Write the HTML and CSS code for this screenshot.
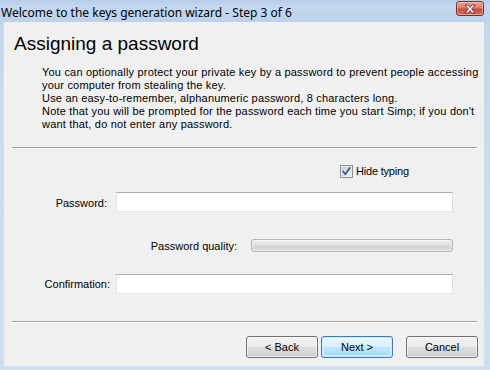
FILE: index.html
```html
<!DOCTYPE html>
<html>
<head>
<meta charset="utf-8">
<link rel="stylesheet" href="styles.css">
</head>
<body>
<div class="window">
  <div class="titlebar">
    <span class="title">Welcome to the keys generation wizard - Step 3 of 6</span>
    <button class="close" aria-label="Close">
      <svg width="14" height="10" viewBox="0 0 14 10">
        <path d="M2 1 L5 1 L7 3.5 L9 1 L12 1 L8.6 5 L12 9 L9 9 L7 6.5 L5 9 L2 9 L5.4 5 Z" fill="#fff" stroke="#5a1e18" stroke-width="0.8" stroke-linejoin="round"/>
      </svg>
    </button>
  </div>
  <div class="client">
    <h1 class="heading">Assigning a password</h1>
    <p class="intro">You can optionally protect your private key by a password to prevent people accessing<br>your computer from stealing the key.<br>Use an easy-to-remember, alphanumeric password, 8 characters long.<br>Note that you will be prompted for the password each time you start Simp; if you don't<br>want that, do not enter any password.</p>
    <div class="sep"></div>
    <div class="check-row">
      <span class="checkbox">
        <svg width="13" height="13" viewBox="0 0 13 13">
          <defs>
            <linearGradient id="cb" x1="0" y1="0" x2="1" y2="1">
              <stop offset="0" stop-color="#cbcfd5"/>
              <stop offset="1" stop-color="#f6f6f6"/>
            </linearGradient>
          </defs>
          <rect x="0.5" y="0.5" width="12" height="12" fill="#fff" stroke="#8e8f8f"/>
          <rect x="2" y="2" width="9" height="9" fill="url(#cb)" stroke="#b9bec4" stroke-width="0.6"/>
          <path d="M3.2 6.4 L5.3 9.2 L9.8 2.8" fill="none" stroke="#34508a" stroke-width="1.6" stroke-linecap="round" stroke-linejoin="round"/>
        </svg>
      </span>
      <span class="check-label">Hide typing</span>
    </div>
    <div class="field-row pw-row">
      <label class="field-label">Password:</label>
      <div class="input"></div>
    </div>
    <div class="field-row quality-row">
      <span class="field-label">Password quality:</span>
      <div class="progress"></div>
    </div>
    <div class="field-row confirm-row">
      <label class="field-label">Confirmation:</label>
      <div class="input"></div>
    </div>
    <div class="sep sep2"></div>
    <div class="buttons">
      <button class="btn">&lt; Back</button>
      <button class="btn btn-default">Next &gt;</button>
      <button class="btn btn-cancel">Cancel</button>
    </div>
  </div>
</div>
</body>
</html>
```
FILE: styles.css
```css
* { box-sizing: border-box; }
html, body { margin: 0; padding: 0; }
body {
  width: 490px;
  height: 370px;
  overflow: hidden;
  font-family: "Liberation Sans", Arial, sans-serif;
  font-size: 11px;
  color: #000;
  background: #c3d7ee;
}
.window {
  width: 490px;
  height: 370px;
  display: flex;
  flex-direction: column;
  background: linear-gradient(to bottom, #bcd2eb 0px, #c6d9ef 40px, #cfdff2 100%);
}
.titlebar {
  height: 22px;
  flex: none;
  display: flex;
  align-items: center;
  justify-content: space-between;
  padding: 0 6px 0 1px;
  background: linear-gradient(to bottom, #b5cde9 0px, #c4d8ee 6px, #bcd2eb 22px);
}
.title {
  font-family: "Noto Sans", "Open Sans", sans-serif;
  font-size: 12px;
  color: #000;
  padding-top: 2px;
}
.close {
  width: 28px;
  height: 15px;
  margin-top: -5px;
  padding: 0;
  border: 1px solid #7a2f28;
  border-radius: 3px;
  background: linear-gradient(to bottom, #e8a493 0%, #d8806f 45%, #c64a3d 55%, #d3735f 100%);
  display: flex;
  align-items: center;
  justify-content: center;
  box-shadow: inset 0 0 0 1px rgba(255,255,255,0.35);
}
.close svg { display: block; }
.client {
  flex: 1;
  margin: 0 6px 4px 3px;
  background: #f0f0f0;
  border-left: 1px solid #d8dde3;
  display: flex;
  flex-direction: column;
}
.heading {
  margin: 11px 0 0 10px;
  font-family: "Liberation Sans", Arial, sans-serif;
  font-weight: normal;
  font-size: 19px;
  line-height: 22px;
}
.intro {
  margin: 11px 0 0 38px;
  line-height: 13px;
  letter-spacing: 0.19px;
}
.sep {
  margin: 16px 7px 0 8px;
  height: 2px;
  border-top: 1px solid #a0a0a0;
  border-bottom: 1px solid #ffffff;
}
.check-row {
  margin: 16px 0 0 336px;
  display: flex;
  align-items: center;
  gap: 3px;
  height: 13px;
  line-height: 13px;
}
.check-label { letter-spacing: -0.2px; }
.checkbox { width: 13px; height: 13px; display: block; }
.checkbox svg { display: block; }
.field-row {
  display: flex;
  align-items: center;
  justify-content: flex-end;
  padding-right: 31px;
}
.field-label {
  line-height: 13px;
  padding-top: 2px;
}
.pw-row { margin-top: 14px; gap: 9px; height: 20px; }
.quality-row { margin-top: 27px; gap: 14px; height: 13px; }
.quality-row .field-label { padding-top: 1px; }
.confirm-row { margin-top: 22px; gap: 6px; height: 20px; }
.confirm-row .field-label { padding-top: 0; }
.input {
  width: 337px;
  height: 20px;
  background: #fff;
  border: 1px solid;
  border-color: #abadb3 #dbdfe6 #e3e9ef #e2e3ea;
}
.progress {
  width: 202px;
  height: 13px;
  border: 1px solid #b4b4b4;
  border-radius: 3px;
  background: linear-gradient(to bottom, #f0f0f0 0%, #e2e2e2 40%, #d3d3d3 60%, #dedede 100%);
  box-shadow: inset 0 0 0 1px rgba(255,255,255,0.5);
}
.sep2 { margin-top: 27px; }
.buttons {
  margin: 13px 6px 0 0;
  display: flex;
  justify-content: flex-end;
}
.btn {
  width: 72px;
  height: 22px;
  padding: 0;
  font-family: "Liberation Sans", Arial, sans-serif;
  font-size: 11px;
  color: #000;
  border: 1px solid #707070;
  border-radius: 3px;
  background: linear-gradient(to bottom, #f2f2f2 0%, #ebebeb 50%, #dddddd 50%, #cfcfcf 100%);
  box-shadow: inset 0 0 0 1px rgba(255,255,255,0.7);
}
.btn-default {
  margin-left: 3px;
  border-color: #3c7fb1;
  background: linear-gradient(to bottom, #eaf6fd 0%, #d9f0fc 50%, #bee6fd 50%, #a7d9f5 100%);
  box-shadow: inset 0 0 0 1px #c6e5f7, inset 0 0 0 2px rgba(255,255,255,0.5);
}
.btn-cancel { margin-left: 13px; }
```
